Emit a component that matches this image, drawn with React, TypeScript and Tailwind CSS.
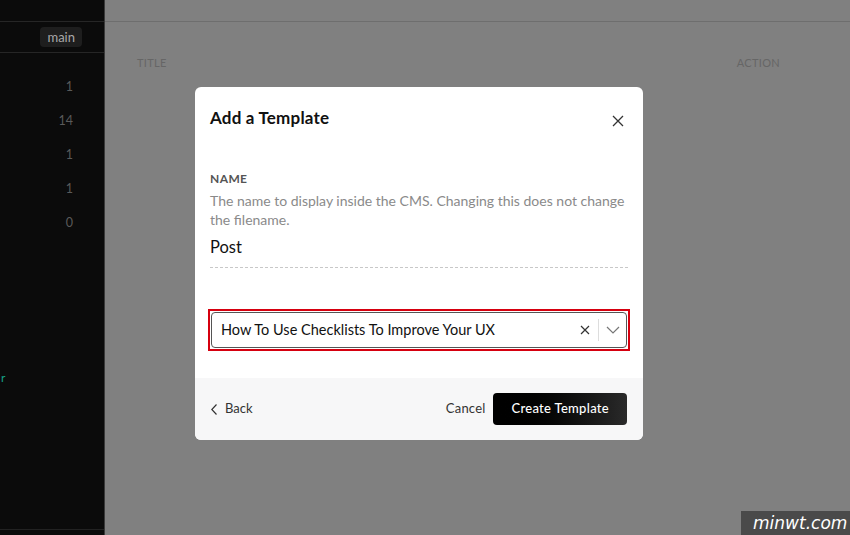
import React from "react";

const font = { fontFamily: "Lato, 'Open Sans', sans-serif" };

export default function App() {
  return (
    <div
      className="relative flex w-[850px] h-[535px] overflow-hidden bg-[#808080]"
      style={font}
    >
      {/* Sidebar */}
      <div className="flex flex-col w-[105px] h-full bg-[#0b0b0b] border-r border-[#3a3a3a] shrink-0">
        <div className="h-[22px] border-b border-[#262626]" />
        <div className="h-[31px] flex items-center justify-end pr-[22px] border-b border-[#262626]">
          <span className="px-[7px] h-[20px] leading-[20px] rounded-[4px] bg-[#1e1e1e] text-[#a8a8a8] text-[13px]">
            main
          </span>
        </div>
        <div className="flex flex-col items-end pr-[31px] text-[12.5px] text-[#5a5a5a] pt-[26px] gap-[18px] leading-[16px]">
          <span>1</span>
          <span>14</span>
          <span>1</span>
          <span>1</span>
          <span>0</span>
        </div>
        <div className="mt-[139px] text-[12px] text-[#16a085] leading-[16px] pl-[1px]">r</div>
        <div className="mt-auto mb-[5px] border-b border-[#222]" />
      </div>

      {/* Main (dimmed) */}
      <div className="flex-1 flex flex-col">
        <div className="h-[22px] border-b border-[#6e6e6e]" />
        <div className="flex justify-between pl-[32px] pr-[70px] pt-[33px] text-[11px] text-[#666] tracking-[0.3px]">
          <span>TITLE</span>
          <span>ACTION</span>
        </div>
      </div>

      {/* Modal */}
      <div className="absolute left-[195px] top-[87px] w-[448px] h-[353px] bg-white rounded-[6px] flex flex-col overflow-hidden">
        <div className="flex-1 px-[15px]">
          <div className="flex items-center justify-between pt-[19px] h-[42px]">
            <h2 className="text-[17px] font-bold text-[#111] leading-[20px] tracking-[0.2px]">Add a Template</h2>
            <svg width="12" height="12" viewBox="0 0 12 12" className="mr-[4px] mt-[6px]">
              <path d="M1 1 L11 11 M11 1 L1 11" stroke="#333" strokeWidth="1.3" />
            </svg>
          </div>
          <div className="mt-[43px] text-[12px] font-bold text-[#555] tracking-[0.4px] leading-[14px]">NAME</div>
          <p className="mt-[5px] text-[14px] text-[#8a8a8a] leading-[19px]">
            The name to display inside the CMS. Changing this does not change the filename.
          </p>
          <div className="mt-[8px] text-[16.5px] text-[#111] leading-[20px] pb-[10px] border-b border-dashed border-[#c8c8c8]">
            Post
          </div>
          <div className="mt-[41px] -mx-[2px] border-2 border-[#d6000f] p-[1px]">
            <div className="flex items-center h-[36px] border border-[#555] rounded-[4px] pl-[9px]">
              <span className="flex-1 text-[14.5px] text-[#111]">How To Use Checklists To Improve Your UX</span>
              <svg width="10" height="10" viewBox="0 0 10 10" className="mr-[8px]">
                <path d="M1 1 L9 9 M9 1 L1 9" stroke="#333" strokeWidth="1.2" />
              </svg>
              <div className="w-px h-[22px] bg-[#ddd]" />
              <svg width="14" height="8" viewBox="0 0 14 8" className="ml-[7px] mr-[6px]">
                <path d="M1 1 L7 7 L13 1" stroke="#777" strokeWidth="1.2" fill="none" />
              </svg>
            </div>
          </div>
        </div>
        <div className="h-[62px] bg-[#f7f7f8] flex items-center px-[16px] pr-[16px]">
          <div className="flex items-center gap-[8px] text-[13px] text-[#333]">
            <svg width="6" height="11" viewBox="0 0 6 11">
              <path d="M5.5 0.5 L0.8 5.5 L5.5 10.5" stroke="#333" strokeWidth="1.2" fill="none" />
            </svg>
            <span>Back</span>
          </div>
          <span className="ml-auto text-[13px] text-[#333] mr-[8px] tracking-[0.2px]">Cancel</span>
          <button className="h-[32px] px-[18px] rounded-[4px] bg-gradient-to-r from-[#000] to-[#2a2a2a] text-white text-[13px] font-medium tracking-[0.3px]">
            Create Template
          </button>
        </div>
      </div>

      {/* Watermark */}
      <div
        className="absolute right-0 bottom-0 w-[109px] h-[24px] bg-[#4a4a4a] text-white text-[17px] italic leading-[24px] pl-[12px]"
        style={{ fontFamily: "'DejaVu Sans', sans-serif" }}
      >
        minwt.com
      </div>
    </div>
  );
}
